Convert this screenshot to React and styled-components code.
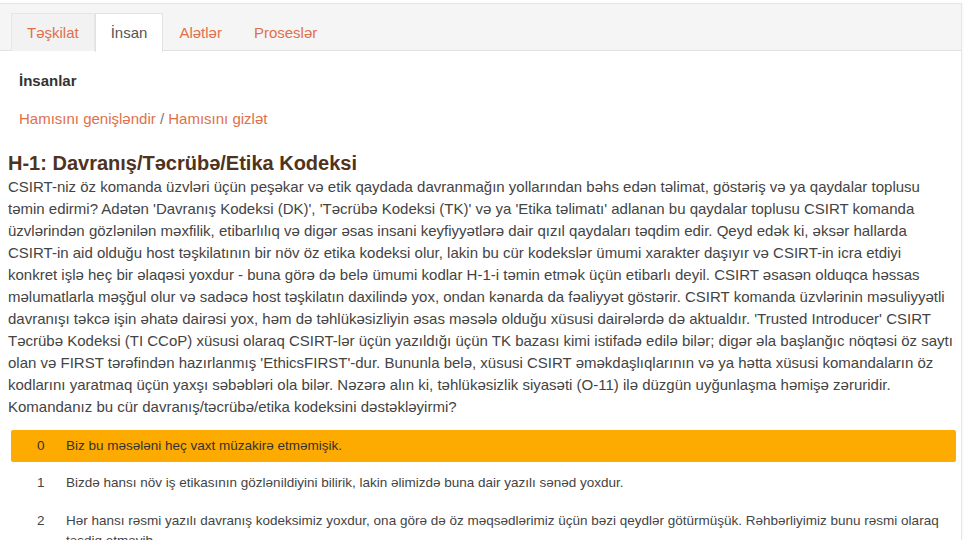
import React from "react";
import styled, { createGlobalStyle } from "styled-components";

const tabs = [
  { id: "org", label: "Təşkilat" },
  { id: "human", label: "İnsan", active: true },
  { id: "tools", label: "Alətlər" },
  { id: "proc", label: "Proseslər" },
];

const lines = [
  "CSIRT-niz öz komanda üzvləri üçün peşəkar və etik qaydada davranmağın yollarından bəhs edən təlimat, göstəriş və ya qaydalar toplusu",
  "təmin edirmi? Adətən 'Davranış Kodeksi (DK)', 'Təcrübə Kodeksi (TK)' və ya 'Etika təlimatı' adlanan bu qaydalar toplusu CSIRT komanda",
  "üzvlərindən gözlənilən məxfilik, etibarlılıq və digər əsas insani keyfiyyətlərə dair qızıl qaydaları təqdim edir. Qeyd edək ki, əksər hallarda",
  "CSIRT-in aid olduğu host təşkilatının bir növ öz etika kodeksi olur, lakin bu cür kodekslər ümumi xarakter daşıyır və CSIRT-in icra etdiyi",
  "konkret işlə heç bir əlaqəsi yoxdur - buna görə də belə ümumi kodlar H-1-i təmin etmək üçün etibarlı deyil. CSIRT əsasən olduqca həssas",
  "məlumatlarla məşğul olur və sadəcə host təşkilatın daxilində yox, ondan kənarda da fəaliyyət göstərir. CSIRT komanda üzvlərinin məsuliyyətli",
  "davranışı təkcə işin əhatə dairəsi yox, həm də təhlükəsizliyin əsas məsələ olduğu xüsusi dairələrdə də aktualdır. 'Trusted Introducer' CSIRT",
  "Təcrübə Kodeksi (TI CCoP) xüsusi olaraq CSIRT-lər üçün yazıldığı üçün TK bazası kimi istifadə edilə bilər; digər əla başlanğıc nöqtəsi öz saytı",
  "olan və FIRST tərəfindən hazırlanmış 'EthicsFIRST'-dur. Bununla belə, xüsusi CSIRT əməkdaşlıqlarının və ya hətta xüsusi komandaların öz",
  "kodlarını yaratmaq üçün yaxşı səbəbləri ola bilər. Nəzərə alın ki, təhlükəsizlik siyasəti (O-11) ilə düzgün uyğunlaşma həmişə zəruridir.",
  "Komandanız bu cür davranış/təcrübə/etika kodeksini dəstəkləyirmi?",
];

const options = [
  { level: 0, text: "Biz bu məsələni heç vaxt müzakirə etməmişik.", selected: true },
  { level: 1, text: "Bizdə hansı növ iş etikasının gözlənildiyini bilirik, lakin əlimizdə buna dair yazılı sənəd yoxdur." },
  {
    level: 2,
    text: "Hər hansı rəsmi yazılı davranış kodeksimiz yoxdur, ona görə də öz məqsədlərimiz üçün bəzi qeydlər götürmüşük. Rəhbərliyimiz bunu rəsmi olaraq təsdiq etməyib.",
  },
];

const App = () => {
  return (
    <>
      <GlobalStyle />
      <Panel>
        <TabBar>
          {tabs.map((tab) => (
            <Tab key={tab.id} $active={tab.active}>
              {tab.label}
            </Tab>
          ))}
        </TabBar>
        <Content>
          <SectionTitle>İnsanlar</SectionTitle>
          <Toggles>
            <ToggleLink href="#">Hamısını genişləndir</ToggleLink> /{" "}
            <ToggleLink href="#">Hamısını gizlət</ToggleLink>
          </Toggles>
          <Heading>H-1: Davranış/Təcrübə/Etika Kodeksi</Heading>
          <Description>
            {lines.map((line, i) => (
              <React.Fragment key={i}>
                {line}
                {i < lines.length - 1 && <br />}
              </React.Fragment>
            ))}
          </Description>
          <Options>
            {options.map((opt) => (
              <Option key={opt.level} $selected={opt.selected}>
                <Level>{opt.level}</Level>
                <OptionText>{opt.text}</OptionText>
              </Option>
            ))}
          </Options>
        </Content>
      </Panel>
    </>
  );
};

const GlobalStyle = createGlobalStyle`
  body {
    margin: 0;
    background: #fff;
    font-family: "Liberation Sans", Arial, sans-serif;
    overflow: hidden;
  }
`;

const Panel = styled.div`
  width: 961px;
  margin-top: 3px;
  border: 1px solid #e6e6e6;
  border-left: none;
  box-shadow: 1px 0 2px rgba(0, 0, 0, 0.04);
`;

const TabBar = styled.div`
  display: flex;
  height: 47px;
  padding: 9px 0 0 11px;
  box-sizing: border-box;
  background: #f5f5f5;
  border-bottom: 1px solid #e2e2e2;
`;

const Tab = styled.div`
  padding: 0 15px;
  line-height: 38px;
  font-size: 15px;
  color: ${(p) => (p.$active ? "#555" : "#e0704a")};
  background: ${(p) => (p.$active ? "#fff" : "transparent")};
  border: 1px solid ${(p) => (p.$active ? "#e2e2e2" : "transparent")};
  border-bottom: none;
  margin-bottom: ${(p) => (p.$active ? "-1px" : "0")};
  height: ${(p) => (p.$active ? "39px" : "38px")};
  box-sizing: border-box;
  &:first-child {
    border-color: #e6e6e6;
    background: #f2f2f2;
  }
`;

const Content = styled.div`
  padding: 20px 0 0 8px;
  color: #444;
`;

const SectionTitle = styled.div`
  margin-left: 11px;
  font-size: 15px;
  font-weight: bold;
  color: #333;
  line-height: 20px;
`;

const Toggles = styled.div`
  margin: 18px 0 0 11px;
  font-size: 15px;
  line-height: 20px;
  color: #777;
`;

const ToggleLink = styled.a`
  color: #e0704a;
  text-decoration: none;
`;

const Heading = styled.h2`
  margin: 21px 0 0;
  font-size: 20px;
  line-height: 26px;
  font-weight: bold;
  color: #4e3320;
`;

const Description = styled.p`
  margin: 0;
  font-size: 15px;
  line-height: 22px;
  color: #444;
  white-space: nowrap;
`;

const Options = styled.div`
  margin: 12px 5px 0 3px;
`;

const Option = styled.div`
  display: flex;
  align-items: baseline;
  padding: 7px 0 11px;
  box-sizing: border-box;
  font-size: 13.5px;
  line-height: 20px;
  color: #444;
  ${(p) =>
    p.$selected &&
    `
    background: #fdab00;
    color: #333;
    border-radius: 2px;
    padding: 6px 0;
    margin-bottom: 4px;
  `}
`;

const Level = styled.span`
  width: 55px;
  padding-left: 26px;
  box-sizing: border-box;
  flex-shrink: 0;
`;

const OptionText = styled.span`
  flex: 1;
  padding-right: 14px;
`;

export default App;
